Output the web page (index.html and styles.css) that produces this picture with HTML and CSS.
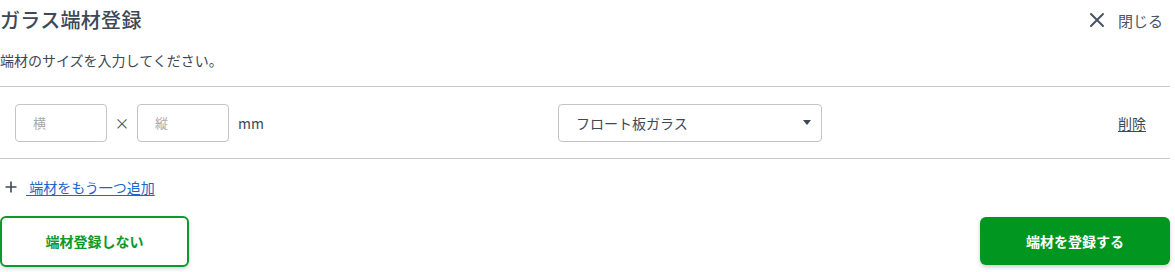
FILE: index.html
```html
<!DOCTYPE html>
<html lang="ja">
<head>
<meta charset="utf-8">
<link rel="stylesheet" href="styles.css">
</head>
<body>
<div class="modal">
  <header class="head">
    <h1 class="title">ガラス端材登録</h1>
    <button class="close" type="button">
      <svg class="close-icon" width="16" height="16" viewBox="0 0 16 16"><path d="M2 2L14 14M14 2L2 14" stroke="#4a5463" stroke-width="2" stroke-linecap="round" fill="none"/></svg>
      <span>閉じる</span>
    </button>
  </header>
  <p class="lead">端材のサイズを入力してください。</p>
  <div class="row">
    <div class="size">
      <input class="num" type="text" placeholder="横">
      <span class="times">×</span>
      <input class="num" type="text" placeholder="縦">
      <span class="unit">mm</span>
    </div>
    <div class="select">
      <span>フロート板ガラス</span>
      <svg class="caret" width="8" height="5" viewBox="0 0 8 5"><path d="M0 0H8L4 5Z" fill="#3d4857"/></svg>
    </div>
    <a class="delete" href="#">削除</a>
  </div>
  <div class="add">
    <svg class="plus" width="12" height="12" viewBox="0 0 12 12"><path d="M6 0.5V11.5M0.5 6H11.5" stroke="#3d4857" stroke-width="1.6" fill="none"/></svg>
    <a class="add-link" href="#">&nbsp;端材をもう一つ追加</a>
  </div>
  <div class="actions">
    <button class="btn btn-outline" type="button">端材登録しない</button>
    <button class="btn btn-fill" type="button">端材を登録する</button>
  </div>
</div>
</body>
</html>
```
FILE: styles.css
```css
* { box-sizing: border-box; }
html, body { margin: 0; padding: 0; background: #fff; }
body {
  font-family: "Noto Sans CJK JP", "Noto Sans", sans-serif;
  color: #3d4857;
  width: 1175px;
  height: 272px;
  overflow: hidden;
}
.modal { width: 1170px; }
.head {
  display: flex;
  align-items: center;
  justify-content: space-between;
  height: 40px;
}
.title {
  margin: 0;
  font-size: 20px;
  font-weight: 500;
  line-height: 40px;
  letter-spacing: 0.3px;
  color: #3d4857;
}
.close {
  display: flex;
  align-items: center;
  gap: 13px;
  background: none;
  border: 0;
  padding: 0 7px 0 0;
  font-family: inherit;
  font-size: 15px;
  color: #4a5463;
  cursor: pointer;
}
.close-icon { display: block; }
.lead {
  margin: 9px 0 0;
  font-size: 14px;
  line-height: 22px;
  color: #3d4857;
}
.row {
  margin-top: 15px;
  height: 73px;
  border-top: 1px solid #c8c8c8;
  border-bottom: 1px solid #c8c8c8;
  display: flex;
  align-items: center;
  padding: 0 24px 0 15px;
}
.size { display: flex; align-items: center; }
.num {
  width: 92px;
  height: 38px;
  border: 1px solid #c4c4c4;
  border-radius: 4px;
  padding: 0 17px;
  font-family: inherit;
  font-size: 13px;
  color: #3d4857;
  outline: none;
}
.num::placeholder { color: #a9a9a9; }
.times {
  width: 30px;
  text-align: center;
  font-size: 15px;
  color: #4a5463;
}
.unit {
  margin-left: 9px;
  font-size: 14px;
  color: #3d4857;
}
.select {
  margin-left: 294px;
  width: 264px;
  height: 38px;
  border: 1px solid #c4c4c4;
  border-radius: 4px;
  display: flex;
  align-items: center;
  justify-content: space-between;
  padding: 0 10px 0 17px;
  font-size: 14px;
  color: #3d4857;
}
.caret { display: block; }
.delete {
  margin-left: auto;
  font-size: 14px;
  color: #3d4857;
  text-decoration: underline;
  text-underline-offset: 2px;
}
.add {
  display: flex;
  align-items: center;
  height: 56px;
  padding-left: 5px;
}
.plus { display: block; margin-right: 9px; }
.add-link {
  font-size: 14px;
  color: #1b66c9;
  text-decoration: underline;
  text-underline-offset: 2px;
}
.actions {
  display: flex;
  justify-content: space-between;
  align-items: center;
  height: 52px;
}
.btn {
  font-family: inherit;
  font-size: 14px;
  font-weight: 700;
  border-radius: 6px;
  cursor: pointer;
}
.btn-outline {
  width: 189px;
  height: 51px;
  background: #fff;
  color: #0c9a2a;
  border: 2px solid #0c9a2a;
  box-shadow: 0 2px 4px rgba(0,0,0,0.15);
}
.btn-fill {
  width: 190px;
  height: 48px;
  background: #00961f;
  color: #fff;
  border: 0;
  box-shadow: 0 2px 4px rgba(0,0,0,0.2);
}
```
